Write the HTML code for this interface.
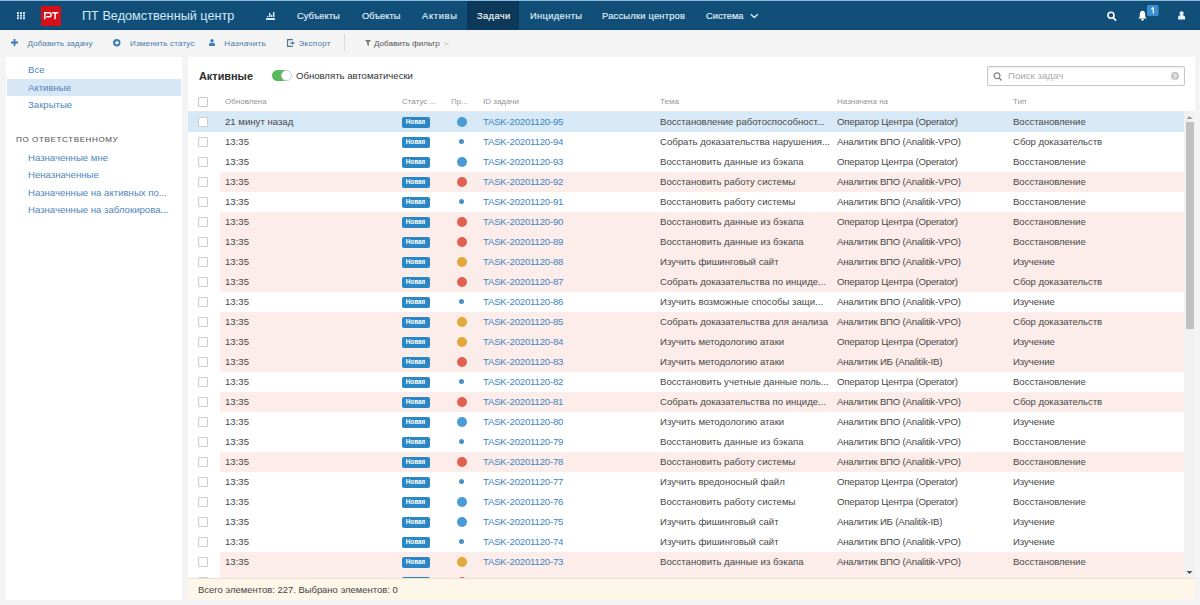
<!DOCTYPE html>
<html><head><meta charset="utf-8"><style>
*{margin:0;padding:0;box-sizing:border-box}
html,body{width:1200px;height:605px;overflow:hidden}
body{background:#f4f4f4;font-family:"Liberation Sans",sans-serif;position:relative;color:#333}
.abs{position:absolute}
#hdr{position:absolute;left:0;top:0;width:1200px;height:30px;background:#114f79;border-top:1px solid #8dbbe0}
#hdr .bot{position:absolute;left:0;top:28px;width:1200px;height:1px;background:#0d466c}
.t{position:absolute;white-space:nowrap;line-height:20px}
.nav{position:absolute;top:1.6px;height:29px;line-height:29px;color:#e2f0fb;font-size:9.3px;font-weight:400;white-space:nowrap;-webkit-text-stroke:0.15px #e2f0fb}
.navact{position:absolute;left:467px;top:1px;width:52px;height:28.5px;background:#0c3859}
#tb{position:absolute;left:0;top:30px;width:1200px;height:27px;background:#f4f4f4}
.tbt{position:absolute;top:30px;height:27px;line-height:27px;font-size:8.1px;color:#4a7aaa;white-space:nowrap}
#left{position:absolute;left:6px;top:57px;width:176px;height:543px;background:#fff}
#main{position:absolute;left:188px;top:57px;width:1007px;height:543px;background:#fff}
.sl{position:absolute;left:28px;font-size:9.6px;color:#4f86ba;white-space:nowrap;line-height:17px;height:17px}
.row{position:absolute;left:188px;width:996px;height:20px}
.row.sel{background:#d7e8f6}
.row.p::before{content:"";position:absolute;left:32px;top:0;right:0;bottom:0;background:#fcecea}
.cb{position:absolute;left:10px;top:5px;width:10px;height:10px;border:1px solid #cdcdcd;background:#fff;border-radius:1px}
.c{position:absolute;top:-1px;line-height:21px;font-size:9.6px;color:#484848;white-space:nowrap}
.c1{left:37px}
.c3{left:295px;color:#3d86c0;letter-spacing:-0.2px}
.c4{left:472px}
.c5{left:649px;letter-spacing:-0.19px}
.c6{left:825px;letter-spacing:-0.05px}
.badge{position:absolute;left:213.5px;top:5.2px;width:28px;height:10.5px;background:#2a86c4;border-radius:2px;color:#fff;font-size:6.3px;font-weight:700;line-height:10.5px;text-align:center}
.dot{position:absolute;border-radius:50%}
.dot.big{left:269px;top:5px;width:10px;height:10px}
.dot.sm{left:271.3px;top:7.2px;width:5px;height:5px;background:#4a8ec4}
.dot.B{background:#4a9ad6}
.dot.R{background:#e2604f}
.dot.O{background:#e3a73a}
.hd{position:absolute;top:92px;line-height:20px;font-size:8px;color:#959595;white-space:nowrap}
#foot{position:absolute;left:188px;top:578px;width:1007px;height:22px;background:#fdf6e9;border-top:1px solid #ebe2d0}

</style></head><body>
<div id="hdr"><div class="bot"></div></div>
<!-- grid icon -->
<svg class="abs" style="left:17px;top:12px" width="9" height="8" viewBox="0 0 9 8"><g fill="#cbe4f5"><rect x="0" y="0" width="2" height="2"/><rect x="3" y="0" width="2" height="2"/><rect x="6" y="0" width="2" height="2"/><rect x="0" y="2.6" width="2" height="2"/><rect x="3" y="2.6" width="2" height="2"/><rect x="6" y="2.6" width="2" height="2"/><rect x="0" y="5.2" width="2" height="2"/><rect x="3" y="5.2" width="2" height="2"/><rect x="6" y="5.2" width="2" height="2"/></g></svg>
<div class="abs" style="left:41px;top:6px;width:20px;height:20px;background:#d5101a"></div>
<svg class="abs" style="left:44px;top:12px" width="15" height="8" viewBox="0 0 15 8"><path d="M0.8 7.2V0.8H5.6Q7 0.8 7 2.4V3.4Q7 4.8 5.6 4.8H2.2" stroke="#fff" stroke-width="1.5" fill="none"/><path d="M8 0.8H14.2M11.1 0.8V7.2" stroke="#fff" stroke-width="1.5" fill="none"/></svg>
<div class="t" style="left:82px;top:6px;font-size:12.7px;color:#d2eafa;line-height:20px">ПТ Ведомственный центр</div>
<!-- chart icon -->
<svg class="abs" style="left:266px;top:11px" width="10" height="9" viewBox="0 0 10 9" shape-rendering="crispEdges"><g fill="#d2eafb"><rect x="0" y="7" width="9" height="2"/><rect x="1" y="5" width="1" height="1"/><rect x="3" y="2" width="1" height="4"/><rect x="5" y="4" width="1" height="2"/><rect x="7" y="1" width="1" height="5"/></g><g fill="#d2eafb" opacity="0.45"><rect x="2" y="5" width="1" height="1"/><rect x="4" y="2" width="1" height="4"/><rect x="6" y="4" width="1" height="2"/><rect x="8" y="1" width="1" height="5"/></g></svg>
<div class="navact"></div>
<div class="nav" style="left:297px">Субъекты</div>
<div class="nav" style="left:362px">Объекты</div>
<div class="nav" style="left:422px;letter-spacing:0.7px">Активы</div>
<div class="nav" style="left:477px;color:#fff;letter-spacing:0.4px">Задачи</div>
<div class="nav" style="left:530px;letter-spacing:0.37px">Инциденты</div>
<div class="nav" style="left:602px;letter-spacing:0.24px">Рассылки центров</div>
<div class="nav" style="left:706px">Система</div>
<svg class="abs" style="left:749.5px;top:12.5px" width="9" height="6" viewBox="0 0 9 6"><path d="M0.8 1.2L4.3 4.5L7.8 1.2" stroke="#d2eaf9" stroke-width="1.4" fill="none"/></svg>
<!-- right icons -->
<svg class="abs" style="left:1107px;top:11px" width="10" height="11" viewBox="0 0 10 11"><circle cx="4" cy="4.3" r="3" stroke="#fff" stroke-width="1.6" fill="none"/><path d="M6.2 6.6L9 9.6" stroke="#fff" stroke-width="1.8"/></svg>
<svg class="abs" style="left:1138px;top:10px" width="9" height="11" viewBox="0 0 9 11"><path d="M4.5 0.8C2.5 0.8 1.8 2.6 1.8 4.4V6.6L0.4 8.5H8.6L7.2 6.6V4.4C7.2 2.6 6.5 0.8 4.5 0.8Z" fill="#fff"/><circle cx="4.5" cy="9.6" r="1.2" fill="#fff"/></svg>
<svg class="abs" style="left:1147px;top:4.5px" width="11.5" height="11" viewBox="0 0 11.5 11"><rect x="0" y="0" width="11.5" height="11" rx="1.5" fill="#3a8fd0"/><path d="M4.3 3.4L5.9 2.3H6.9V8.6H5.7V3.9L4.3 4.7Z" fill="#fff"/></svg>
<svg class="abs" style="left:1178px;top:11px" width="8" height="9" viewBox="0 0 8 9"><circle cx="3.6" cy="2.3" r="2" fill="#e8f4fc"/><path d="M0.1 8.4V6.4C0.1 4.9 1.1 3.9 3.6 3.9C6.1 3.9 7.1 4.9 7.1 6.4V8.4Z" fill="#e8f4fc"/></svg>

<div id="tb"></div>
<svg class="abs" style="left:10.5px;top:39px" width="7" height="7" viewBox="0 0 7 7"><path d="M3.5 0V7M0 3.5H7" stroke="#3d78b4" stroke-width="1.8"/></svg>
<div class="tbt" style="left:27.5px;letter-spacing:0.1px">Добавить задачу</div>
<svg class="abs" style="left:112.5px;top:39px" width="8" height="8" viewBox="0 0 8 8"><circle cx="3.8" cy="3.8" r="3.7" fill="#3d78b4"/><path d="M1.9 3.8H4.6M3.5 2.2L5.2 3.8L3.5 5.4" stroke="#fff" stroke-width="1.3" fill="none"/></svg>
<div class="tbt" style="left:130px;letter-spacing:0.14px">Изменить статус</div>
<svg class="abs" style="left:209px;top:39px" width="6" height="7" viewBox="0 0 6 7"><circle cx="3" cy="1.8" r="1.7" fill="#3d80be"/><path d="M0 7V5.4C0 4.3 1 3.7 3 3.7C5 3.7 6 4.3 6 5.4V7Z" fill="#3d80be"/></svg>
<div class="tbt" style="left:224.3px;letter-spacing:0.25px">Назначить</div>
<svg class="abs" style="left:287px;top:38.5px" width="8" height="8" viewBox="0 0 8 8"><path d="M5.8 0.6H0.6V7.4H5.8" stroke="#4a7090" stroke-width="1.1" fill="none"/><path d="M3 4H6.5M5.2 2.6L6.8 4L5.2 5.4" stroke="#3d78b4" stroke-width="1.1" fill="none"/></svg>
<div class="tbt" style="left:298.5px;letter-spacing:0.25px">Экспорт</div>
<div class="abs" style="left:344px;top:34px;width:1px;height:17px;background:#dcdcdc"></div>
<svg class="abs" style="left:365px;top:40px" width="6" height="6" viewBox="0 0 6 6"><path d="M0 0H6L3.8 2.6V6L2.2 5V2.6Z" fill="#777"/></svg>
<div class="tbt" style="left:374px;color:#555">Добавить фильтр</div>
<svg class="abs" style="left:444px;top:41.5px" width="5" height="3" viewBox="0 0 5 3"><path d="M0.3 0.3L2.5 2.5L4.7 0.3" stroke="#aaa" stroke-width="0.8" fill="none"/></svg>

<div id="left"></div>
<div class="abs" style="left:7px;top:79px;width:174px;height:17px;background:#d6e7f6"></div>
<div class="sl" style="top:61.3px">Все</div>
<div class="sl" style="top:79px">Активные</div>
<div class="sl" style="top:96px">Закрытые</div>
<div class="abs" style="left:16px;top:131.5px;font-size:8px;font-weight:400;letter-spacing:0.64px;color:#5c5c5c;-webkit-text-stroke:0.1px #5c5c5c;white-space:nowrap;line-height:16px">ПО ОТВЕТСТВЕННОМУ</div>
<div class="sl" style="top:149px">Назначенные мне</div>
<div class="sl" style="top:166px">Неназначенные</div>
<div class="sl" style="top:184px">Назначенные на активных по...</div>
<div class="sl" style="top:201px">Назначенные на заблокирова...</div>

<div id="main"></div>
<div class="t" style="left:199px;top:66px;font-size:10.9px;font-weight:700;color:#2e2e2e">Активные</div>
<div class="abs" style="left:272px;top:70px;width:19px;height:11px;border-radius:5.5px;background:#5cb85c"></div>
<div class="abs" style="left:280.5px;top:69.8px;width:11px;height:11px;border-radius:50%;background:#fff;border:1px solid #cfcfcf"></div>
<div class="t" style="left:296px;top:66px;font-size:9.57px;color:#333">Обновлять автоматически</div>
<div class="abs" style="left:987px;top:66px;width:198px;height:20px;border:1px solid #c8c8c8;border-radius:2px;background:#fff;box-shadow:inset 0 1px 2px rgba(0,0,0,0.08)"></div>
<svg class="abs" style="left:993px;top:72px" width="10" height="10" viewBox="0 0 10 10"><circle cx="4" cy="3.8" r="2.9" stroke="#858585" stroke-width="1.3" fill="none"/><path d="M6.1 6L8.6 8.6" stroke="#858585" stroke-width="1.5"/></svg>
<div class="t" style="left:1008px;top:66px;font-size:9.7px;color:#aaa">Поиск задач</div>
<svg class="abs" style="left:1171px;top:72px" width="8" height="8" viewBox="0 0 8 8"><circle cx="4" cy="4" r="4" fill="#c4c4c4"/><text x="4" y="6.6" font-size="7" font-weight="700" fill="#fff" text-anchor="middle" font-family="Liberation Sans">?</text></svg>

<div class="abs" style="left:198px;top:96.5px;width:10px;height:10px;border:1px solid #c8c8c8;border-radius:1px"></div>
<div class="hd" style="left:225px">Обновлена</div>
<div class="hd" style="left:402px">Статус ...</div>
<div class="hd" style="left:451px">Пр...</div>
<div class="hd" style="left:483px">ID задачи</div>
<div class="hd" style="left:660px">Тема</div>
<div class="hd" style="left:837px">Назначена на</div>
<div class="hd" style="left:1013px">Тип</div>
<div class="abs" style="left:188px;top:111px;width:996px;height:1px;background:#e3e8ec"></div>

<div class="abs" style="left:0;top:0;width:1200px;height:578px;overflow:hidden">
<div class="row sel" style="top:112px"><span class="cb"></span><span class="c c1">21 минут назад</span><span class="badge">Новая</span><i class="dot big B"></i><span class="c c3">TASK-20201120-95</span><span class="c c4">Восстановление работоспособност...</span><span class="c c5">Оператор Центра (Operator)</span><span class="c c6">Восстановление</span></div>
<div class="row " style="top:132px"><span class="cb"></span><span class="c c1">13:35</span><span class="badge">Новая</span><i class="dot sm"></i><span class="c c3">TASK-20201120-94</span><span class="c c4">Собрать доказательства нарушения...</span><span class="c c5">Аналитик ВПО (Analitik-VPO)</span><span class="c c6">Сбор доказательств</span></div>
<div class="row " style="top:152px"><span class="cb"></span><span class="c c1">13:35</span><span class="badge">Новая</span><i class="dot big B"></i><span class="c c3">TASK-20201120-93</span><span class="c c4">Восстановить данные из бэкапа</span><span class="c c5">Оператор Центра (Operator)</span><span class="c c6">Восстановление</span></div>
<div class="row p" style="top:172px"><span class="cb"></span><span class="c c1">13:35</span><span class="badge">Новая</span><i class="dot big R"></i><span class="c c3">TASK-20201120-92</span><span class="c c4">Восстановить работу системы</span><span class="c c5">Аналитик ВПО (Analitik-VPO)</span><span class="c c6">Восстановление</span></div>
<div class="row " style="top:192px"><span class="cb"></span><span class="c c1">13:35</span><span class="badge">Новая</span><i class="dot sm"></i><span class="c c3">TASK-20201120-91</span><span class="c c4">Восстановить работу системы</span><span class="c c5">Аналитик ВПО (Analitik-VPO)</span><span class="c c6">Восстановление</span></div>
<div class="row p" style="top:212px"><span class="cb"></span><span class="c c1">13:35</span><span class="badge">Новая</span><i class="dot big R"></i><span class="c c3">TASK-20201120-90</span><span class="c c4">Восстановить данные из бэкапа</span><span class="c c5">Оператор Центра (Operator)</span><span class="c c6">Восстановление</span></div>
<div class="row p" style="top:232px"><span class="cb"></span><span class="c c1">13:35</span><span class="badge">Новая</span><i class="dot big R"></i><span class="c c3">TASK-20201120-89</span><span class="c c4">Восстановить данные из бэкапа</span><span class="c c5">Аналитик ВПО (Analitik-VPO)</span><span class="c c6">Восстановление</span></div>
<div class="row p" style="top:252px"><span class="cb"></span><span class="c c1">13:35</span><span class="badge">Новая</span><i class="dot big O"></i><span class="c c3">TASK-20201120-88</span><span class="c c4">Изучить фишинговый сайт</span><span class="c c5">Аналитик ВПО (Analitik-VPO)</span><span class="c c6">Изучение</span></div>
<div class="row p" style="top:272px"><span class="cb"></span><span class="c c1">13:35</span><span class="badge">Новая</span><i class="dot big R"></i><span class="c c3">TASK-20201120-87</span><span class="c c4">Собрать доказательства по инциде...</span><span class="c c5">Оператор Центра (Operator)</span><span class="c c6">Сбор доказательств</span></div>
<div class="row " style="top:292px"><span class="cb"></span><span class="c c1">13:35</span><span class="badge">Новая</span><i class="dot sm"></i><span class="c c3">TASK-20201120-86</span><span class="c c4">Изучить возможные способы защи...</span><span class="c c5">Аналитик ВПО (Analitik-VPO)</span><span class="c c6">Изучение</span></div>
<div class="row p" style="top:312px"><span class="cb"></span><span class="c c1">13:35</span><span class="badge">Новая</span><i class="dot big O"></i><span class="c c3">TASK-20201120-85</span><span class="c c4">Собрать доказательства для анализа</span><span class="c c5">Аналитик ВПО (Analitik-VPO)</span><span class="c c6">Сбор доказательств</span></div>
<div class="row p" style="top:332px"><span class="cb"></span><span class="c c1">13:35</span><span class="badge">Новая</span><i class="dot big O"></i><span class="c c3">TASK-20201120-84</span><span class="c c4">Изучить методологию атаки</span><span class="c c5">Оператор Центра (Operator)</span><span class="c c6">Изучение</span></div>
<div class="row p" style="top:352px"><span class="cb"></span><span class="c c1">13:35</span><span class="badge">Новая</span><i class="dot big R"></i><span class="c c3">TASK-20201120-83</span><span class="c c4">Изучить методологию атаки</span><span class="c c5">Аналитик ИБ (Analitik-IB)</span><span class="c c6">Изучение</span></div>
<div class="row " style="top:372px"><span class="cb"></span><span class="c c1">13:35</span><span class="badge">Новая</span><i class="dot sm"></i><span class="c c3">TASK-20201120-82</span><span class="c c4">Восстановить учетные данные поль...</span><span class="c c5">Оператор Центра (Operator)</span><span class="c c6">Восстановление</span></div>
<div class="row p" style="top:392px"><span class="cb"></span><span class="c c1">13:35</span><span class="badge">Новая</span><i class="dot big R"></i><span class="c c3">TASK-20201120-81</span><span class="c c4">Собрать доказательства по инциде...</span><span class="c c5">Аналитик ВПО (Analitik-VPO)</span><span class="c c6">Сбор доказательств</span></div>
<div class="row " style="top:412px"><span class="cb"></span><span class="c c1">13:35</span><span class="badge">Новая</span><i class="dot big B"></i><span class="c c3">TASK-20201120-80</span><span class="c c4">Изучить методологию атаки</span><span class="c c5">Аналитик ВПО (Analitik-VPO)</span><span class="c c6">Изучение</span></div>
<div class="row " style="top:432px"><span class="cb"></span><span class="c c1">13:35</span><span class="badge">Новая</span><i class="dot sm"></i><span class="c c3">TASK-20201120-79</span><span class="c c4">Восстановить данные из бэкапа</span><span class="c c5">Аналитик ВПО (Analitik-VPO)</span><span class="c c6">Восстановление</span></div>
<div class="row p" style="top:452px"><span class="cb"></span><span class="c c1">13:35</span><span class="badge">Новая</span><i class="dot big R"></i><span class="c c3">TASK-20201120-78</span><span class="c c4">Восстановить работу системы</span><span class="c c5">Аналитик ВПО (Analitik-VPO)</span><span class="c c6">Восстановление</span></div>
<div class="row " style="top:472px"><span class="cb"></span><span class="c c1">13:35</span><span class="badge">Новая</span><i class="dot sm"></i><span class="c c3">TASK-20201120-77</span><span class="c c4">Изучить вредоносный файл</span><span class="c c5">Оператор Центра (Operator)</span><span class="c c6">Изучение</span></div>
<div class="row " style="top:492px"><span class="cb"></span><span class="c c1">13:35</span><span class="badge">Новая</span><i class="dot big B"></i><span class="c c3">TASK-20201120-76</span><span class="c c4">Восстановить работу системы</span><span class="c c5">Оператор Центра (Operator)</span><span class="c c6">Восстановление</span></div>
<div class="row " style="top:512px"><span class="cb"></span><span class="c c1">13:35</span><span class="badge">Новая</span><i class="dot big B"></i><span class="c c3">TASK-20201120-75</span><span class="c c4">Изучить фишинговый сайт</span><span class="c c5">Аналитик ИБ (Analitik-IB)</span><span class="c c6">Изучение</span></div>
<div class="row " style="top:532px"><span class="cb"></span><span class="c c1">13:35</span><span class="badge">Новая</span><i class="dot sm"></i><span class="c c3">TASK-20201120-74</span><span class="c c4">Изучить фишинговый сайт</span><span class="c c5">Аналитик ВПО (Analitik-VPO)</span><span class="c c6">Изучение</span></div>
<div class="row p" style="top:552px"><span class="cb"></span><span class="c c1">13:35</span><span class="badge">Новая</span><i class="dot big O"></i><span class="c c3">TASK-20201120-73</span><span class="c c4">Восстановить данные из бэкапа</span><span class="c c5">Аналитик ВПО (Analitik-VPO)</span><span class="c c6">Восстановление</span></div>
<div class="row p" style="top:572px"><span class="cb"></span><span class="c c1">13:35</span><span class="badge">Новая</span><i class="dot big R"></i><span class="c c3">TASK-20201120-72</span><span class="c c4">Изучить методологию атаки</span><span class="c c5">Аналитик ВПО (Analitik-VPO)</span><span class="c c6">Изучение</span></div>
</div>
<!-- scrollbar -->
<div class="abs" style="left:1184px;top:111px;width:11px;height:467px;background:#f1f1f1"></div>
<svg class="abs" style="left:1185px;top:115px" width="9" height="5" viewBox="0 0 9 5"><path d="M1.5 4L4.5 1L7.5 4Z" fill="#999"/></svg>
<div class="abs" style="left:1185.5px;top:122px;width:8px;height:207px;background:#c1c1c1"></div>
<svg class="abs" style="left:1185px;top:570px" width="9" height="5" viewBox="0 0 9 5"><path d="M1.5 1L4.5 4L7.5 1Z" fill="#505050"/></svg>

<div id="foot"></div>
<div class="t" style="left:198px;top:579.7px;font-size:9.45px;color:#444">Всего элементов: 227. Выбрано элементов: 0</div>

</body></html>
